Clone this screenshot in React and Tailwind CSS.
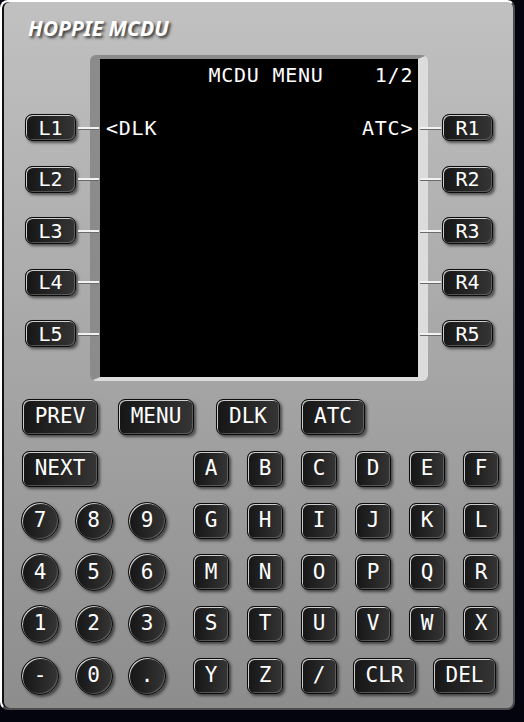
import React from "react";

const mono = "font-['DejaVu_Sans_Mono','Liberation_Mono',monospace]";

const keyLook =
  "flex items-center justify-center text-white border border-[#0c0c0c] bg-linear-to-r from-[#161616] to-[#353535] shadow-[2px_2px_3px_rgba(0,0,0,0.55),inset_1px_1px_0_rgba(235,235,235,0.85),inset_-1px_-1px_0_rgba(120,120,120,0.6)]";

function Key({ label, width = "w-[36px]", className = "" }) {
  return (
    <div className={`${keyLook} ${width} h-[36px] rounded-[7px] text-[21px] ${mono} ${className}`}>
      {label}
    </div>
  );
}

function RoundKey({ label }) {
  return (
    <div className={`${keyLook} w-[38px] h-[38px] rounded-full text-[21px] ${mono}`}>
      {label}
    </div>
  );
}

function Lsk({ label }) {
  return (
    <div className={`${keyLook} w-[51px] h-[27px] rounded-[7px] text-[20px] leading-none ${mono}`}>
      {label}
    </div>
  );
}

function Tick() {
  return <div className="w-[21px] h-[2px] bg-[#f2f2f2] shadow-[0_1px_0_#6a6a6a]" />;
}

const leftKeys = ["L1", "L2", "L3", "L4", "L5"];
const rightKeys = ["R1", "R2", "R3", "R4", "R5"];

const digitRows = [
  { digits: ["7", "8", "9"], letters: ["G", "H", "I", "J", "K", "L"] },
  { digits: ["4", "5", "6"], letters: ["M", "N", "O", "P", "Q", "R"] },
  { digits: ["1", "2", "3"], letters: ["S", "T", "U", "V", "W", "X"] },
];

export default function App() {
  return (
    <div className="min-h-screen bg-[#04040f]">
      <div className="w-[515px] h-[710px] rounded-[8px] border-2 border-t-white border-l-white border-r-[#4c4c4c] border-b-[#4c4c4c] bg-linear-to-b from-[#c1c1c1] to-[#8d8d8d] shadow-[inset_2px_0_0_#111] flex flex-col">
        {/* Header */}
        <div className="h-[53px] pl-[26px] pt-[14px]">
          <div className="text-[21px] leading-[24px] font-bold italic text-white font-['Noto_Sans','Open_Sans',sans-serif] [text-shadow:2px_2px_3px_#333]">
            HOPPIE MCDU
          </div>
        </div>

        {/* Display row */}
        <div className="flex h-[326px]">
          <div className="relative z-10 w-[98px] pl-[23px] pt-[59px] flex flex-col gap-[24.5px]">
            {leftKeys.map((k) => (
              <div key={k} className="flex items-center gap-[2px]">
                <Lsk label={k} />
                <Tick />
              </div>
            ))}
          </div>

          <div className="-ml-[10px] w-[338px] h-[326px] rounded-[6px] border-x-[10px] border-y-[4px] border-t-[#8b8b8b] border-l-[#8b8b8b] border-r-[#dcdcdc] border-b-[#dcdcdc]">
            <div className={`w-full h-full bg-black text-white pl-[6px] text-[20px] tracking-[0.76px] whitespace-pre ${mono}`}>
              <div className="h-[32px] leading-[32px]">{"        MCDU MENU    1/2"}</div>
              <div className="mt-[24px] h-[26px] leading-[26px]">{"<DLK                ATC>"}</div>
            </div>
          </div>

          <div className="relative z-10 -ml-[8px] pt-[59px] flex flex-col gap-[24.5px]">
            {rightKeys.map((k) => (
              <div key={k} className="flex items-center gap-[1px]">
                <Tick />
                <Lsk label={k} />
              </div>
            ))}
          </div>
        </div>

        {/* Keypad */}
        <div className="mt-[18px] flex flex-col gap-[15.8px]">
          <div className="flex items-center pl-[20px]">
            <Key label="PREV" width="w-[76px]" />
            <Key label="MENU" width="w-[76px]" className="ml-[20px]" />
            <Key label="DLK" width="w-[64px]" className="ml-[22px]" />
            <Key label="ATC" width="w-[64px]" className="ml-[21px]" />
          </div>

          <div className="flex items-center pl-[20px]">
            <Key label="NEXT" width="w-[76px]" />
            <div className="ml-[95px] flex gap-[18px]">
              {["A", "B", "C", "D", "E", "F"].map((l) => (
                <Key key={l} label={l} />
              ))}
            </div>
          </div>

          {digitRows.map((row, i) => (
            <div key={i} className="flex items-center h-[36px] pl-[19px]">
              <div className="flex gap-[15.5px]">
                {row.digits.map((d) => (
                  <RoundKey key={d} label={d} />
                ))}
              </div>
              <div className="ml-[27px] flex gap-[18px]">
                {row.letters.map((l) => (
                  <Key key={l} label={l} />
                ))}
              </div>
            </div>
          ))}

          <div className="flex items-center h-[36px] pl-[19px]">
            <div className="flex gap-[15.5px]">
              {["-", "0", "."].map((d) => (
                <RoundKey key={d} label={d} />
              ))}
            </div>
            <div className="ml-[27px] flex gap-[18px]">
              {["Y", "Z", "/"].map((l) => (
                <Key key={l} label={l} />
              ))}
            </div>
            <Key label="CLR" width="w-[63px]" className="ml-[16px]" />
            <Key label="DEL" width="w-[63px]" className="ml-[17px]" />
          </div>
        </div>
      </div>
    </div>
  );
}
